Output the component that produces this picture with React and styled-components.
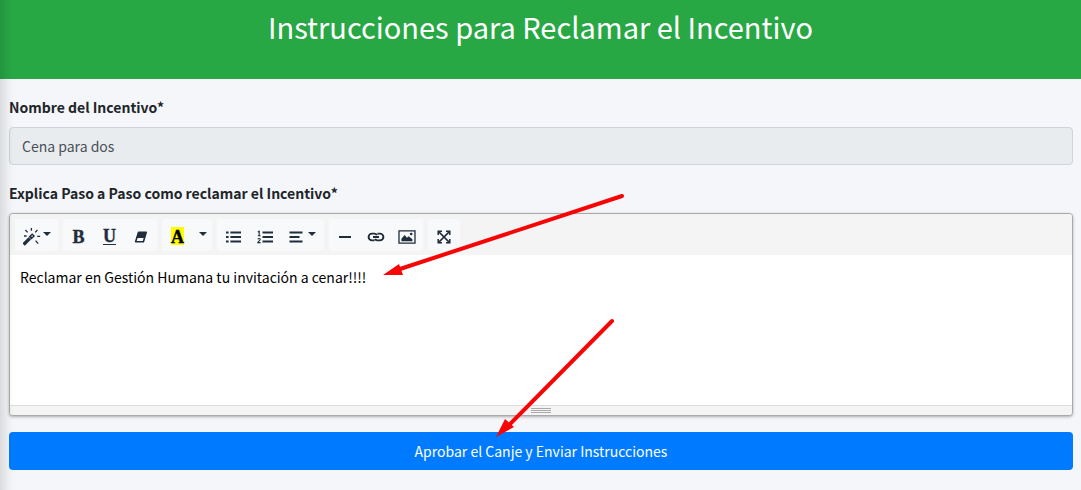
import styled, {createGlobalStyle} from "styled-components";

const GlobalStyle = createGlobalStyle`
    :root {
        --ff-primary: 'Noto Sans CJK SC', 'Open Sans', sans-serif;
        --ff-icon: 'Liberation Serif', serif;

        --clr-background: #f4f6f9;
        --clr-success: #28a745;
        --clr-primary: #007bff;
        --clr-font: #212529;
        --clr-icon: #1f2d3d;
        --clr-arrow: #f70505;

        --fs-title: 29px;
        --fs-body: 14px;
    }

    *, *::before, *::after {
        box-sizing: border-box;
    }

    body {
        margin: 0;
        background: var(--clr-background);
        color: var(--clr-font);
        font-family: var(--ff-primary);
        font-size: var(--fs-body);
        line-height: 24px;
    }
`

const Page = styled.div`
    position: relative;
    min-height: 100vh;
    overflow: hidden;
`

const SideShadow = styled.div`
    position: absolute;
    top: 0;
    bottom: 0;
    left: 0;
    width: 14px;
    background: linear-gradient(to right, rgba(0, 0, 0, .11), rgba(0, 0, 0, .03) 60%, transparent);
    pointer-events: none;
`

const Header = styled.header`
    padding: 6px 8px 33px;
    background: var(--clr-success);
    color: #fff;
    text-align: center;
`

const Title = styled.h1`
    margin: 0;
    font-size: var(--fs-title);
    font-weight: 400;
    line-height: 40px;
`

const Form = styled.form`
    display: flex;
    flex-direction: column;
    gap: 16px;
    padding: 16px 8px 20px 9px;
`

const Field = styled.div`
    display: flex;
    flex-direction: column;
    gap: 8px;
`

const Label = styled.label`
    font-weight: 700;
`

const TextInput = styled.input`
    width: 100%;
    height: 38px;
    padding: 6px 12px;
    border: 1px solid #ced4da;
    border-radius: 4px;
    background: #e9ecef;
    color: #495057;
    font: inherit;
`

const Editor = styled.div`
    border: 1px solid #a9a9a9;
    border-radius: 4px;
    background: #fff;
    box-shadow: 0 1px 3px rgba(0, 0, 0, .3);
    overflow: hidden;
`

const Toolbar = styled.div`
    display: flex;
    flex-wrap: wrap;
    gap: 5px;
    padding: 5px 5px 4px;
    background: #f4f4f4;
`

const ToolGroup = styled.div`
    display: flex;
    background: #f8f9fa;
    border-radius: 3px;
`

const ToolButton = styled.button`
    display: flex;
    align-items: center;
    justify-content: center;
    gap: 2px;
    width: ${props => props.$width || 31}px;
    height: 32px;
    padding: 4px 0 0;
    border: 0;
    background: none;
    color: var(--clr-icon);
    cursor: pointer;
`

const Letter = styled.span`
    font-family: var(--ff-icon);
    font-size: 18px;
    font-weight: 700;
    line-height: 18px;
    -webkit-text-stroke: 0.4px;
`

const Underlined = styled(Letter)`
    line-height: 15px;
    border-bottom: 1px solid;
`

const Marked = styled(Letter)`
    margin-bottom: 2px;
    padding-top: 2px;
    line-height: 16px;
    color: #000;
    background: #ff0;
`

const Writing = styled.textarea`
    display: block;
    width: 100%;
    height: 150px;
    padding: 10px;
    border: 0;
    outline: 0;
    resize: none;
    background: #fff;
    color: #000;
    font: inherit;
`

const StatusBar = styled.div`
    display: flex;
    flex-direction: column;
    align-items: center;
    gap: 1px;
    height: 10px;
    padding-top: 2px;
    border-top: 1px solid #ddd;
    background: #f4f4f4;
`

const Grip = styled.span`
    width: 20px;
    height: 1px;
    background: #a9a9a9;
`

const SubmitButton = styled.button`
    height: 38px;
    border: 0;
    border-radius: 4px;
    background: var(--clr-primary);
    color: #fff;
    font: inherit;
    cursor: pointer;
`

const Arrows = styled.svg`
    position: absolute;
    top: 0;
    left: 0;
    pointer-events: none;
`

function Icon({children}) {
    return (
        <svg width="18" height="18" viewBox="0 0 18 18" fill="none" stroke="currentColor" strokeWidth="2.2" aria-hidden="true">
            {children}
        </svg>
    )
}

function Caret() {
    return (
        <svg width="8" height="18" viewBox="0 0 8 18" fill="currentColor" aria-hidden="true">
            <path d="M0 4h8L4 8z" />
        </svg>
    )
}

function App() {

    return (
        <>
        <GlobalStyle />
        <Page>
            <Header>
                <Title>Instrucciones para Reclamar el Incentivo</Title>
            </Header>
            <Form onSubmit={e => e.preventDefault()}>
                <Field>
                    <Label htmlFor="nombre">Nombre del Incentivo*</Label>
                    <TextInput id="nombre" value="Cena para dos" readOnly />
                </Field>
                <Field>
                    <Label htmlFor="pasos">Explica Paso a Paso como reclamar el Incentivo*</Label>
                    <Editor>
                        <Toolbar>
                            <ToolGroup>
                                <ToolButton type="button" $width={43} aria-label="Estilo">
                                    <Icon>
                                        <path d="M.6 16.6l6.2-6.2" strokeWidth="3.4" />
                                        <path d="M7 10.2L10.6 6.6" strokeWidth="4" />
                                        <path d="M8.6 8.6l1-1" stroke="#f8f9fa" strokeWidth="1.3" />
                                        <path d="M8.4 0v2.8M2.4 2l2.2 2.4M14.4 2l-2.2 2.4M1 8h2.6M14.2 8.4h3M12.6 12.6l2.6 3" strokeWidth="1.3" />
                                    </Icon>
                                    <Caret />
                                </ToolButton>
                            </ToolGroup>
                            <ToolGroup>
                                <ToolButton type="button" aria-label="Negrita"><Letter>B</Letter></ToolButton>
                                <ToolButton type="button" aria-label="Subrayado"><Underlined>U</Underlined></ToolButton>
                                <ToolButton type="button" $width={32} aria-label="Borrar formato">
                                    <Icon>
                                        <path d="M6.6 4.2h7.6l-2.8 9.6H3.6z" strokeWidth="1.6" strokeLinejoin="round" />
                                        <path d="M6.2 4h8.4l-1.8 6H4.4z" fill="currentColor" stroke="none" />
                                    </Icon>
                                </ToolButton>
                            </ToolGroup>
                            <ToolGroup>
                                <ToolButton type="button" aria-label="Color reciente"><Marked>A</Marked></ToolButton>
                                <ToolButton type="button" $width={19} aria-label="Más colores"><Caret /></ToolButton>
                            </ToolGroup>
                            <ToolGroup>
                                <ToolButton type="button" $width={32} aria-label="Lista">
                                    <Icon>
                                        <path d="M6.4 4.5H17M6.4 9H17M6.4 13.5H17M2 4.5h2.6M2 9h2.6M2 13.5h2.6" />
                                    </Icon>
                                </ToolButton>
                                <ToolButton type="button" aria-label="Lista numerada">
                                    <Icon>
                                        <path d="M6.5 4.5H17M6.5 9H17M6.5 13.5H17" />
                                        <path d="M1.8 4l1.4-.8v4.6M1.8 7.8H4.6M1.8 11.2c.6-1 2.6-.8 2.4.4 0 .9-1.8 1.6-2.4 3h2.8" strokeWidth="1.1" />
                                    </Icon>
                                </ToolButton>
                                <ToolButton type="button" $width={44} aria-label="Párrafo">
                                    <Icon>
                                        <path d="M1.5 4.5h13M1.5 9h10M1.5 13.5h13" />
                                    </Icon>
                                    <Caret />
                                </ToolButton>
                            </ToolGroup>
                            <ToolGroup>
                                <ToolButton type="button" aria-label="Línea horizontal">
                                    <Icon><path d="M3 9h12" /></Icon>
                                </ToolButton>
                                <ToolButton type="button" aria-label="Enlace">
                                    <Icon>
                                        <path d="M7.6 12.4H5A3.4 3.4 0 0 1 5 5.6h2.4c1.2 0 2 .6 2.4 1.6M10.4 5.6H13a3.4 3.4 0 0 1 0 6.8h-2.4c-1.2 0-2-.6-2.4-1.6M6 9h6" strokeWidth="1.9" />
                                    </Icon>
                                </ToolButton>
                                <ToolButton type="button" $width={32} aria-label="Imagen">
                                    <Icon>
                                        <path d="M1 2.8h16v12.4H1z" strokeWidth="1.3" />
                                        <path d="M3.4 13.2v-2.4L6.6 7l2.4 2.8 1.6-1.6 3.8 3v2z" fill="currentColor" stroke="none" />
                                        <circle cx="13.2" cy="6" r="1.3" fill="currentColor" stroke="none" />
                                    </Icon>
                                </ToolButton>
                            </ToolGroup>
                            <ToolGroup>
                                <ToolButton type="button" $width={32} aria-label="Pantalla completa">
                                    <Icon>
                                        <path d="M3.4 3.4l11.2 11.2M14.6 3.4L3.4 14.6" strokeWidth="1.5" />
                                        <path d="M3.2 7V3.2H7M11 3.2h3.8V7M14.8 11v3.8H11M7 14.8H3.2V11" strokeWidth="1.5" />
                                    </Icon>
                                </ToolButton>
                            </ToolGroup>
                        </Toolbar>
                        <Writing id="pasos" defaultValue="Reclamar en Gestión Humana tu invitación a cenar!!!!" />
                        <StatusBar>
                            <Grip />
                            <Grip />
                            <Grip />
                        </StatusBar>
                    </Editor>
                </Field>
                <SubmitButton type="submit">Aprobar el Canje y Enviar Instrucciones</SubmitButton>
            </Form>
            <SideShadow />
            <Arrows width="640" height="450" viewBox="0 0 640 450" fill="var(--clr-arrow)" stroke="var(--clr-arrow)" aria-hidden="true">
                <path d="M622 196L400 269M612 321L508 426" strokeWidth="4" strokeLinecap="round" />
                <path d="M383 275l16-11 4 11zM496 437l9-18 9 8z" stroke="none" />
            </Arrows>
        </Page>
        </>
    )
}

export default App;
